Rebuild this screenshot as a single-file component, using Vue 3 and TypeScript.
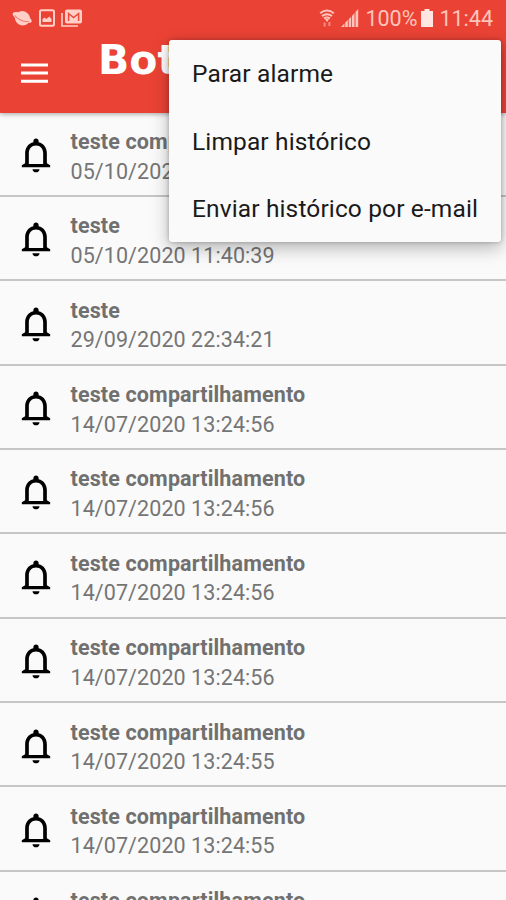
<script setup lang="ts">
interface Alarm {
  name: string
  date: string
}

const alarms: Alarm[] = [
  { name: 'teste compartilhamento', date: '05/10/2020 11:40:39' },
  { name: 'teste', date: '05/10/2020 11:40:39' },
  { name: 'teste', date: '29/09/2020 22:34:21' },
  { name: 'teste compartilhamento', date: '14/07/2020 13:24:56' },
  { name: 'teste compartilhamento', date: '14/07/2020 13:24:56' },
  { name: 'teste compartilhamento', date: '14/07/2020 13:24:56' },
  { name: 'teste compartilhamento', date: '14/07/2020 13:24:56' },
  { name: 'teste compartilhamento', date: '14/07/2020 13:24:55' },
  { name: 'teste compartilhamento', date: '14/07/2020 13:24:55' },
  { name: 'teste compartilhamento', date: '14/07/2020 13:24:55' },
]

const menu: string[] = ['Parar alarme', 'Limpar histórico', 'Enviar histórico por e-mail']
</script>

<template>
  <div class="screen">
    <header class="top">
      <div class="status">
        <div class="notices">
          <svg class="planet" width="22" height="18" viewBox="0 0 22 18">
            <g transform="rotate(24 11 9)">
              <ellipse cx="11.500" cy="9" rx="7.500" ry="7.200" fill="#ffcfc8" />
              <ellipse cx="11" cy="8.500" rx="10.300" ry="4" fill="#ffcfc8" />
              <path d="M3.500 9.500c3 2.600 12 2.600 15-.2" fill="none" stroke="#f2796d" stroke-width="1" />
            </g>
          </svg>
          <svg width="16" height="18" viewBox="0 0 16 18">
            <rect x="1" y="1.2" width="14" height="15.600" rx="1.500" fill="none" stroke="#ffcfc8" stroke-width="2" />
            <path d="M3.500 13V10l2-1.500 1.800 1.500 3-2.500 2.200 2.500v3z" fill="#ffcfc8" />
          </svg>
          <svg class="mail" width="22" height="18" viewBox="0 0 22 18">
            <path d="M1 4v13h16" fill="none" stroke="#ffcfc8" stroke-width="1.600" />
            <rect x="4" y=".5" width="17" height="14" rx="2" fill="#ffcfc8" />
            <path d="M7.600 12V4.500l5 4 5-4V12" fill="none" stroke="#ec4a3b" stroke-width="1.500" />
          </svg>
        </div>
        <div class="system">
          <svg width="16" height="19" viewBox="0 0 16 19" fill="none" stroke="#ffc4bc">
            <path d="M1.200 4.200Q8-1.200 14.800 4.200M3 7q5-3.600 10 0M5 9.400q3-2 6 0" stroke-width="2" />
            <path d="M6 10h4l-2 3z" fill="#ffc4bc" stroke="none" />
            <path d="M5.600 17.500v-4M10.400 13v4" stroke="#f58a7f" stroke-width="2" />
          </svg>
          <svg class="signal" width="18" height="18" viewBox="0 0 18 18" fill="#ffc4bc">
            <path d="M0 18l3.500-3.500V18zM4.300 13.500L6.800 11v7H4.300zM7.700 10.300l2.500-2.500V18H7.700zM11 7l2.500-3v14H11zM14.500 3L17.200 0v18h-2.700z" />
          </svg>
          <span class="percent">100%</span>
          <svg class="battery" width="12" height="18" viewBox="0 0 12 18" fill="#ffe6e2">
            <path d="M3.500 0h5v2H12v16H0V2h3.500z" />
          </svg>
          <span class="clock">11:44</span>
        </div>
      </div>
      <div class="toolbar">
        <svg class="burger" width="27" height="21" viewBox="0 0 27 21" fill="#fff">
          <path d="M0 .5h27v3H0zM0 8.500h27v3H0zM0 16.700h27v3H0z" />
        </svg>
        <h1>Bot</h1>
      </div>
    </header>

    <ul class="list">
      <li v-for="(a, i) in alarms" :key="i">
        <svg class="bell" width="42" height="42" viewBox="0 0 24 24">
          <path d="M12 21.900c1.100 0 2-.8 2-1.800h-4c0 1 .9 1.800 2 1.800zm6.200-5.200V11c0-3.070-1.730-5.640-4.700-6.320V4c0-.83-.67-1.500-1.500-1.500s-1.500.67-1.500 1.500v.68C7.540 5.360 5.800 7.920 5.800 11v5.700L3.900 17.800v1.200h16.200v-1.200zm-2.100.5H7.900V11c0-2.480 1.610-4.400 4.100-4.400s4.100 1.920 4.100 4.400z" />
        </svg>
        <div class="info">
          <span class="name">{{ a.name }}</span>
          <span class="date">{{ a.date }}</span>
        </div>
      </li>
    </ul>

    <nav class="menu">
      <button v-for="m in menu" :key="m" type="button">{{ m }}</button>
    </nav>
  </div>
</template>

<style>
body {
  margin: 0;
  overflow: hidden;
}
</style>

<style scoped>
.screen {
  position: relative;
  width: 506px;
  height: 900px;
  overflow: hidden;
  background: #fafafa;
  font-family: Roboto, sans-serif;
}
.top {
  position: relative;
  z-index: 1;
  height: 112.500px;
  background: #ea4335;
  box-shadow: 0 1px 5px rgba(0, 0, 0, 0.35);
}
.status {
  display: flex;
  justify-content: space-between;
  height: 36px;
  padding: 0 13px 0 11px;
  color: #ffc4bc;
  font-size: 21.500px;
  line-height: 37px;
}
.notices,
.system {
  display: flex;
  align-items: center;
}
.mail {
  margin-left: 6px;
}
.planet {
  margin-right: 6px;
}
.system svg:first-child {
  margin-right: 1px;
}
.signal {
  margin: 0 6px 0 5px;
}
.battery {
  margin: 0 6px 0 4px;
}
.toolbar {
  display: flex;
  height: 76px;
  padding-left: 21px;
}
.burger {
  margin: 27px 50px 0 0;
}
h1 {
  margin: 0;
  color: #fff;
  font: bold 41px/49px 'DejaVu Sans', sans-serif;
}
.list {
  margin: 0;
  padding: 0;
  list-style: none;
}
li {
  box-sizing: border-box;
  display: flex;
  height: 84.370px;
  padding: 21.500px 0 0 14.500px;
  border-bottom: 2px solid #c6c6c6;
}
.bell {
  flex: none;
  margin-right: 14px;
}
.info {
  display: flex;
  flex-direction: column;
  margin-top: -7px;
  color: #757575;
  font-size: 21.500px;
  line-height: 29.500px;
  white-space: nowrap;
}
.name {
  color: #707070;
  font-weight: 700;
  letter-spacing: 0.14px;
}
.date {
  letter-spacing: 0.08px;
}
.menu {
  position: absolute;
  z-index: 2;
  top: 40px;
  left: 169px;
  box-sizing: border-box;
  display: flex;
  flex-direction: column;
  width: 332px;
  height: 202px;
  border-radius: 3px;
  background: #fafafa;
  box-shadow: 0 6px 18px rgba(0, 0, 0, 0.28), 0 0 4px rgba(0, 0, 0, 0.25);
}
.menu button {
  height: 67.500px;
  padding: 0 0 0 23px;
  border: 0;
  background: none;
  color: #1a1a1a;
  font: 24.500px/67.500px Roboto, sans-serif;
  letter-spacing: 0.13px;
  text-align: left;
  white-space: nowrap;
}
</style>
